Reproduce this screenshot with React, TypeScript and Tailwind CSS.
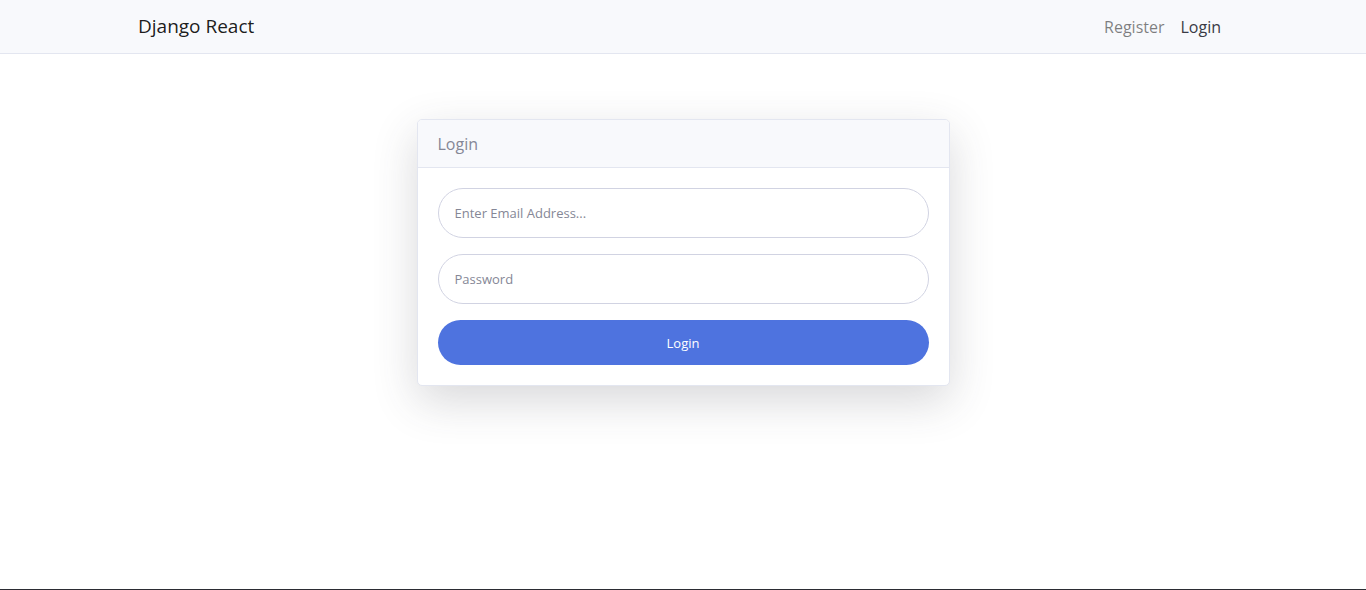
export default function App() {
  return (
    <div className="flex min-h-[590px] flex-col bg-white font-['Open_Sans',sans-serif]">
      <nav className="h-[54px] border-b border-[#e3e6f0] bg-[#f8f9fc]">
        <div className="mx-auto flex h-full w-[1110px] items-center justify-between pl-[10px] pr-[17px]">
          <span className="text-[19px] text-black/90">Django React</span>
          <div className="flex items-center gap-4 text-[16px]">
            <a className="text-black/50">Register</a>
            <a className="text-[#3a3b45]">Login</a>
          </div>
        </div>
      </nav>

      <main className="flex flex-1 justify-center pt-[65px]">
        <div className="h-fit w-[533px] overflow-hidden rounded-[5px] border border-[#e3e6f0] bg-white shadow-[0_15px_45px_rgba(58,59,69,0.2)]">
          <div className="flex h-[48px] items-center border-b border-[#e3e6f0] bg-[#f8f9fc] px-5 text-[16px] text-[#858796]">
            Login
          </div>
          <form className="flex flex-col gap-4 p-5" onSubmit={(e) => e.preventDefault()}>
            <input
              type="email"
              placeholder="Enter Email Address..."
              className="h-[50px] w-full rounded-full border border-[#d1d3e2] px-4 text-[13px] text-[#6e707e] outline-none placeholder:text-[#858796]"
            />
            <input
              type="password"
              placeholder="Password"
              className="h-[50px] w-full rounded-full border border-[#d1d3e2] px-4 text-[13px] text-[#6e707e] outline-none placeholder:text-[#858796]"
            />
            <button
              type="submit"
              className="h-[45px] w-full rounded-full bg-[#4e73df] pt-[2px] text-[13px] text-white"
            >
              Login
            </button>
          </form>
        </div>
      </main>

      <div className="h-px bg-[#2b2c33]" />
    </div>
  );
}
